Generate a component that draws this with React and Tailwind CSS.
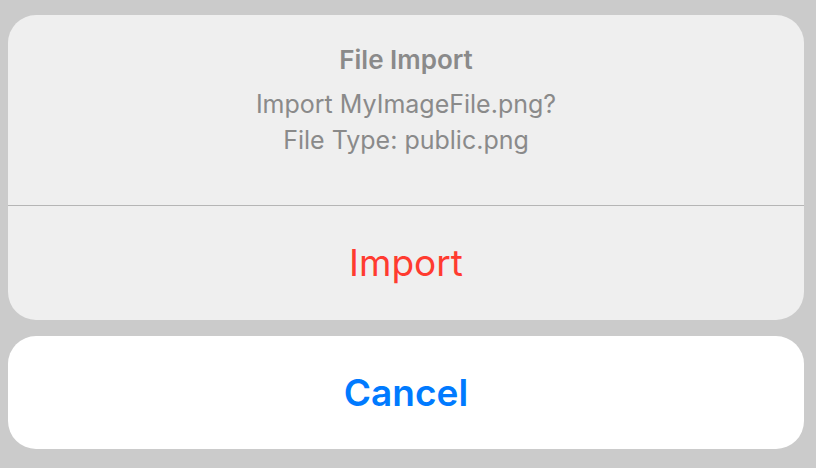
export default function App() {
  return (
    <div className="w-[816px] h-[468px] bg-[#cbcbcb] pl-2 pr-3 pt-[15px] flex flex-col gap-4" style={{ fontFamily: "Inter, 'Noto Sans', sans-serif" }}>
      <div className="h-[305px] rounded-[28px] bg-[#efefef] flex flex-col overflow-hidden">
        <div className="h-[190px] flex flex-col items-center pt-[30px] text-[#8a8a8a]">
          <div className="text-[26px] font-semibold leading-[30px]">File Import</div>
          <div className="text-[25px] leading-[36px] mt-[11px]">Import MyImageFile.png?</div>
          <div className="text-[25px] leading-[36px]">File Type: public.png</div>
        </div>
        <div className="h-px bg-[#b5b5b5]" />
        <div className="flex-1 flex items-center justify-center text-[#ff3b30] text-[37px]">Import</div>
      </div>
      <div className="h-[113px] rounded-[28px] bg-white flex items-center justify-center text-[#007aff] text-[37px] font-semibold">
        Cancel
      </div>
    </div>
  );
}
